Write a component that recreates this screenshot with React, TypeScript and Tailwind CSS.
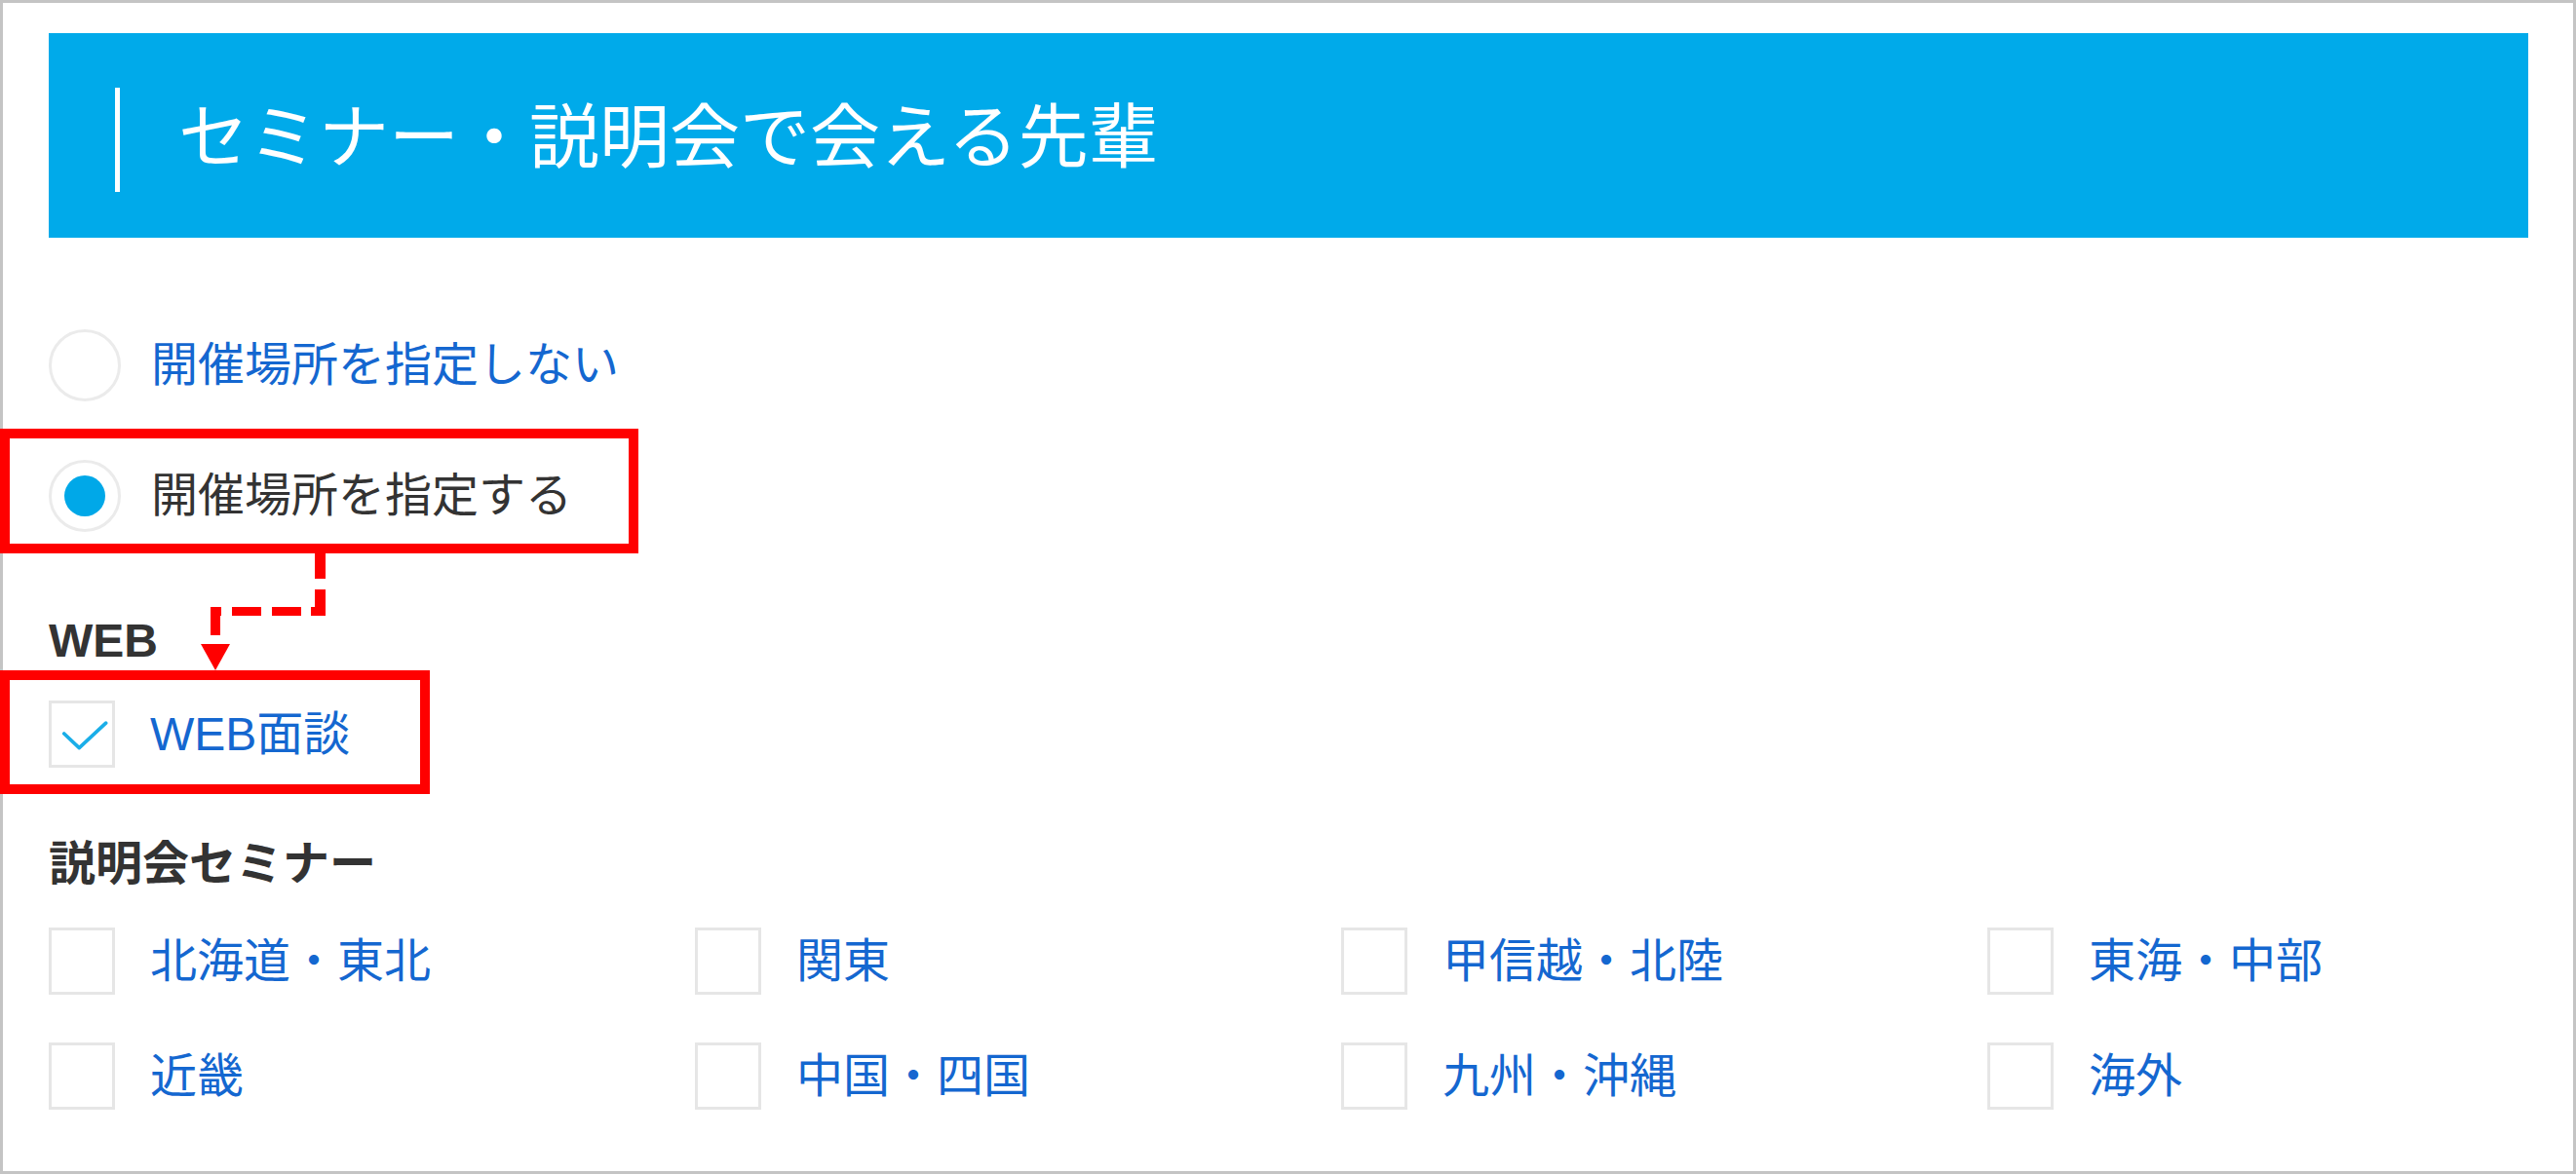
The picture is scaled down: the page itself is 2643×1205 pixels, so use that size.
import React from "react";

const FONT = { fontFamily: '"Liberation Sans", "Noto Sans CJK JP", sans-serif' };

function Box({ checked = false }: { checked?: boolean }) {
  return (
    <div className="w-[68px] h-[69px] shrink-0 border-[3px] border-[#e6e6e6] bg-white flex items-center justify-center">
      {checked && (
        <svg width="68" height="69" viewBox="0 0 68 69" className="block">
          <polyline
            points="14,34 31,50 61,22"
            fill="none"
            stroke="#1aaee8"
            strokeWidth="4"
            strokeLinecap="round"
            strokeLinejoin="round"
          />
        </svg>
      )}
    </div>
  );
}

function CheckItem({ label, checked = false }: { label: string; checked?: boolean }) {
  return (
    <div className="flex items-center h-[69px]">
      <Box checked={checked} />
      <span className="ml-[36px] text-[48px] leading-[48px] text-[#1467d0] whitespace-nowrap">{label}</span>
    </div>
  );
}

function Radio({ label, selected = false }: { label: string; selected?: boolean }) {
  return (
    <div className="flex items-center h-[74px]">
      <div className="w-[74px] h-[74px] shrink-0 rounded-full border-[3px] border-[#ebebeb] flex items-center justify-center">
        {selected && <div className="w-[42px] h-[42px] rounded-full bg-[#00a8e8]" />}
      </div>
      <span
        className={
          "ml-[31px] text-[48px] leading-[48px] whitespace-nowrap " +
          (selected ? "text-[#333333]" : "text-[#1467d0]")
        }
      >
        {label}
      </span>
    </div>
  );
}

const regions = [
  "北海道・東北",
  "関東",
  "甲信越・北陸",
  "東海・中部",
  "近畿",
  "中国・四国",
  "九州・沖縄",
  "海外",
];

export default function App() {
  return (
    <div className="relative w-[2643px] h-[1205px] bg-white overflow-hidden" style={FONT}>
      <div className="w-full h-full border-[3px] border-[#c4c4c4] pt-[31px] pl-[47px] pr-[46px]">
        {/* header */}
        <div className="h-[210px] bg-[#00aaea] flex items-start">
          <div className="ml-[68px] mt-[56px] w-[5px] h-[107px] bg-white" />
          <h1 className="ml-[60px] mt-[65px] text-[72px] leading-[72px] font-normal text-white whitespace-nowrap" style={{ fontFamily: '"Noto Sans CJK JP", sans-serif' }}>
            セミナー・説明会で会える先輩
          </h1>
        </div>

        {/* radios */}
        <div className="mt-[94px] flex flex-col gap-[60px]">
          <Radio label="開催場所を指定しない" />
          <Radio label="開催場所を指定する" selected />
        </div>

        {/* WEB */}
        <div className="mt-[88px] text-[48px] leading-[48px] font-bold text-[#333333]">WEB</div>
        <div className="mt-[37px]">
          <CheckItem label="WEB面談" checked />
        </div>

        {/* seminar */}
        <div className="mt-[75px] text-[48px] leading-[48px] font-bold text-[#333333]">説明会セミナー</div>
        <div className="mt-[41px] grid grid-cols-[repeat(4,663px)] gap-y-[49px]">
          {regions.map((r) => (
            <CheckItem key={r} label={r} />
          ))}
        </div>
      </div>

      {/* annotation overlays */}
      <div className="absolute left-0 top-[440px] w-[655px] h-[128px] border-[10px] border-[#ff0000] pointer-events-none" />
      <div className="absolute left-0 top-[688px] w-[441px] h-[127px] border-[10px] border-[#ff0000] pointer-events-none" />
      <svg
        className="absolute left-0 top-0 pointer-events-none"
        width="2643"
        height="1205"
        viewBox="0 0 2643 1205"
      >
        <g fill="#ff0000">
          <rect x="323" y="568" width="11" height="26" />
          <rect x="323" y="605" width="11" height="27" />
          <rect x="319" y="623" width="15" height="9" />
          <rect x="279" y="623" width="30" height="9" />
          <rect x="238" y="623" width="30" height="9" />
          <rect x="216" y="623" width="11" height="9" />
          <rect x="216" y="623" width="10" height="29" />
          <polygon points="206,661 236,661 221,688" />
        </g>
      </svg>
    </div>
  );
}
